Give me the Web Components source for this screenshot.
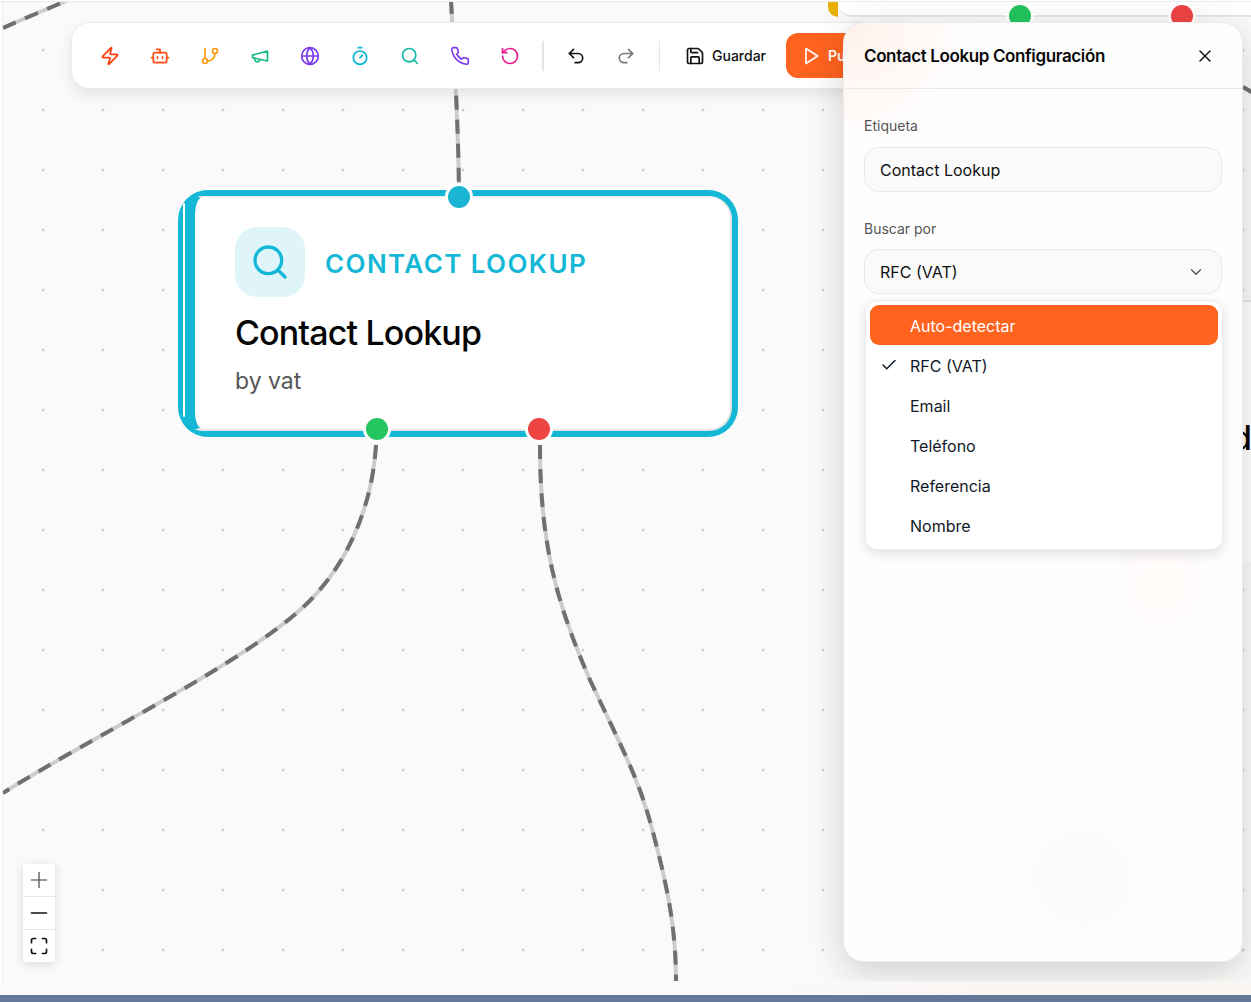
<!DOCTYPE html>
<html lang="es">
<head>
  <meta charset="UTF-8">
  <title>Contact Lookup Configuración</title>
  <style>
    html, body { margin: 0; height: 100%; overflow: hidden; }
    body {
      background-color: #f9f6f4;
      font-family: 'Inter', 'Liberation Sans', sans-serif;
      color: #0a0a0a;
    }
  </style>
</head>
<body>

<script>
  const ICONS = {
    zap: '<path d="M4 14a1 1 0 0 1-.78-1.63l9.9-10.2a.5.5 0 0 1 .86.46l-1.92 6.02A1 1 0 0 0 13 10h7a1 1 0 0 1 .78 1.63l-9.9 10.2a.5.5 0 0 1-.86-.46l1.92-6.02A1 1 0 0 0 11 14z"/>',
    bot: '<path d="M12 8V4H8"/><rect x="4" y="8" width="16" height="12" rx="2"/><path d="M2 14h2"/><path d="M20 14h2"/><path d="M15 13v2"/><path d="M9 13v2"/>',
    branch: '<line x1="6" y1="3" x2="6" y2="15"/><circle cx="18" cy="6" r="3"/><circle cx="6" cy="18" r="3"/><path d="M18 9a9 9 0 0 1-9 9"/>',
    megaphone: '<path d="m3 11 18-5v12L3 14v-3z"/><path d="M11.6 16.8a3 3 0 1 1-5.8-1.6"/>',
    globe: '<circle cx="12" cy="12" r="10"/><path d="M12 2a14.5 14.5 0 0 0 0 20 14.5 14.5 0 0 0 0-20"/><path d="M2 12h20"/>',
    timer: '<line x1="10" y1="2" x2="14" y2="2"/><line x1="12" y1="14" x2="15" y2="11"/><circle cx="12" cy="14" r="8"/>',
    search: '<circle cx="11" cy="11" r="8"/><path d="m21 21-4.3-4.3"/>',
    phone: '<path d="M22 16.92v3a2 2 0 0 1-2.18 2 19.79 19.79 0 0 1-8.63-3.07 19.5 19.5 0 0 1-6-6 19.79 19.79 0 0 1-3.07-8.67A2 2 0 0 1 4.11 2h3a2 2 0 0 1 2 1.72 12.84 12.84 0 0 0 .7 2.81 2 2 0 0 1-.45 2.11L8.09 9.91a16 16 0 0 0 6 6l1.27-1.27a2 2 0 0 1 2.11-.45 12.84 12.84 0 0 0 2.81.7A2 2 0 0 1 22 16.92z"/>',
    rotate: '<path d="M3 12a9 9 0 1 0 9-9 9.75 9.75 0 0 0-6.74 2.74L3 8"/><path d="M3 3v5h5"/>',
    undo: '<path d="M9 14 4 9l5-5"/><path d="M4 9h10.5a5.5 5.5 0 0 1 5.5 5.5a5.5 5.5 0 0 1-5.5 5.5H11"/>',
    redo: '<path d="m15 14 5-5-5-5"/><path d="M20 9H9.5A5.5 5.5 0 0 0 4 14.5A5.5 5.5 0 0 0 9.5 20H13"/>',
    save: '<path d="M15.2 3a2 2 0 0 1 1.4.6l3.8 3.8a2 2 0 0 1 .6 1.4V19a2 2 0 0 1-2 2H5a2 2 0 0 1-2-2V5a2 2 0 0 1 2-2z"/><path d="M17 21v-7a1 1 0 0 0-1-1H8a1 1 0 0 0-1 1v7"/><path d="M7 3v4a1 1 0 0 0 1 1h7"/>',
    play: '<polygon points="6 3 20 12 6 21 6 3"/>',
    x: '<path d="M18 6 6 18"/><path d="m6 6 12 12"/>',
    chevron: '<path d="m6 9 6 6 6-6"/>',
    check: '<path d="M20 6 9 17l-5-5"/>',
    plus: '<path d="M12 3v18"/><path d="M3 12h18"/>',
    minus: '<path d="M3 12h18"/>',
    fit: '<path d="M8 3H5a2 2 0 0 0-2 2v3"/><path d="M21 8V5a2 2 0 0 0-2-2h-3"/><path d="M3 16v3a2 2 0 0 0 2 2h3"/><path d="M16 21h3a2 2 0 0 0 2-2v-3"/>'
  };

  class BaseElement extends HTMLElement {
    constructor() {
      super();
      this.attachShadow({ mode: 'open' });
    }
    render(css, html) {
      this.shadowRoot.innerHTML = `<style>${css}</style>${html}`;
    }
  }

  class UiIcon extends BaseElement {
    connectedCallback() {
      const size = this.getAttribute('size') || 20;
      const width = this.getAttribute('stroke') || 2;
      const color = this.getAttribute('color') || 'currentColor';
      this.render(':host { display: inline-flex; flex: none; } svg { display: block; }',
        `<svg width="${size}" height="${size}" viewBox="0 0 24 24" fill="none" stroke="${color}" stroke-width="${width}" stroke-linecap="round" stroke-linejoin="round">${ICONS[this.getAttribute('name')]}</svg>`);
    }
  }
  customElements.define('ui-icon', UiIcon);

  class ToolButton extends BaseElement {
    connectedCallback() {
      this.render(`
        :host { display: flex; width: 36px; height: 36px; align-items: center; justify-content: center; flex: none; }
      `, '<slot></slot>');
    }
  }
  customElements.define('tool-button', ToolButton);

  class FlowToolbar extends BaseElement {
    connectedCallback() {
      this.render(`
        :host {
          position: absolute; left: 69px; top: 21px;
          display: flex; align-items: center; gap: 14px;
          height: 65px; padding: 0 20px; box-sizing: border-box;
          background: #fff; border-radius: 18px;
          box-shadow: 0 0 0 1px #ececec, 0 6px 16px rgba(0,0,0,.1);
          white-space: nowrap;
        }
        .sep { width: 2px; height: 30px; background: #e4e4e4; flex: none; }
        .sep.thin { width: 1px; margin: 0 .5px; }
        .save { display: flex; align-items: center; gap: 7px; padding: 0 6px 0 11px; width: 98px; box-sizing: border-box; font-size: 14px; font-weight: 500; color: #111; }
        .publish {
          display: flex; align-items: center; gap: 7px; height: 45px; padding: 0 15px;
          background: #ff631f; color: #fff; border-radius: 12px; font-size: 14px; font-weight: 600;
        }
      `, `
        <tool-button><ui-icon name="zap" color="#ff3b0a"></ui-icon></tool-button>
        <tool-button><ui-icon name="bot" color="#ff4a12"></ui-icon></tool-button>
        <tool-button><ui-icon name="branch" color="#ff9a0a"></ui-icon></tool-button>
        <tool-button><ui-icon name="megaphone" color="#10b981"></ui-icon></tool-button>
        <tool-button><ui-icon name="globe" color="#7c3aed"></ui-icon></tool-button>
        <tool-button><ui-icon name="timer" color="#06b6d4"></ui-icon></tool-button>
        <tool-button><ui-icon name="search" color="#14b8a6"></ui-icon></tool-button>
        <tool-button><ui-icon name="phone" color="#7c3aed"></ui-icon></tool-button>
        <tool-button><ui-icon name="rotate" color="#ec1a8f"></ui-icon></tool-button>
        <div class="sep"></div>
        <tool-button><ui-icon name="undo" color="#111"></ui-icon></tool-button>
        <tool-button><ui-icon name="redo" color="#777"></ui-icon></tool-button>
        <div class="sep thin"></div>
        <div class="save"><ui-icon name="save" color="#111"></ui-icon><span>Guardar</span></div>
        <div class="publish"><ui-icon name="play" color="#fff"></ui-icon><span>Publicar</span></div>
      `);
    }
  }
  customElements.define('flow-toolbar', FlowToolbar);

  class FlowHandle extends BaseElement {
    connectedCallback() {
      const s = this.style;
      s.left = this.getAttribute('x') + 'px';
      s.top = this.getAttribute('y') + 'px';
      s.background = this.getAttribute('color');
      this.render(`
        :host {
          position: absolute; width: 22px; height: 22px; border-radius: 50%;
          margin: -11px 0 0 -11px; box-shadow: 0 0 0 3px #fff;
        }
      `, '');
    }
  }
  customElements.define('flow-handle', FlowHandle);

  class FlowNode extends BaseElement {
    connectedCallback() {
      this.style.left = this.getAttribute('x') + 'px';
      this.style.top = this.getAttribute('y') + 'px';
      this.render(`
        :host {
          position: absolute; width: 560px; height: 247px; box-sizing: border-box;
          border: 6px solid #14b8d6; border-left-width: 5px; border-radius: 30px;
          background: #14b8d6;
        }
        .sliver { position: absolute; left: 0; top: 7px; bottom: 14px; width: 2px; background: #fff; border-radius: 2px; }
        .card {
          height: 100%; box-sizing: border-box; margin-left: 2px;
          padding: 30px 0 0 40px; border-left: 10px solid #14b8d6;
          border-top: 1px solid #e9e9e9;
          border-right: 2px solid #e6e6e6; border-bottom: 2px solid #e6e6e6;
          border-radius: 18px 23px 23px 18px; background: #fff;
        }
        .head { display: flex; align-items: center; gap: 20px; }
        .tile {
          width: 70px; height: 70px; border-radius: 22px; background: #dff5fa;
          display: flex; align-items: center; justify-content: center; color: #14b8d6;
        }
        .kind { margin-top: 2px; font-size: 26px; font-weight: 600; letter-spacing: 1.4px; color: #14b8d6; text-transform: uppercase; }
        .title { margin-top: 14px; font-size: 34px; line-height: 44px; font-weight: 500; letter-spacing: -.85px; color: #050505; }
        .sub { margin-top: 11px; font-size: 23px; line-height: 30px; color: #555; }
      `, `
        <div class="sliver"></div>
        <div class="card">
          <div class="head">
            <div class="tile"><ui-icon name="search" size="40" color="#14b8d6"></ui-icon></div>
            <div class="kind"><slot name="kind"></slot></div>
          </div>
          <div class="title"><slot name="title"></slot></div>
          <div class="sub"><slot name="sub"></slot></div>
        </div>
        <slot name="handles"></slot>
      `);
    }
  }
  customElements.define('flow-node', FlowNode);

  // nodes that are mostly hidden behind the panel
  class BackNode extends BaseElement {
    connectedCallback() {
      this.render(`
        :host {
          position: absolute; left: 825px; top: -200px; width: 560px; height: 215px;
          display: flex;
        }
        .bar { width: 10px; background: #e8b008; border-radius: 0 0 0 10px; }
        .card { flex: 1; background: #fff; border-bottom: 2px solid #e6e6e6; border-radius: 0 0 0 14px; box-sizing: border-box; }
      `, '<div class="bar"></div><div class="card"></div>');
    }
  }
  customElements.define('back-node', BackNode);

  class BackCard extends BaseElement {
    connectedCallback() {
      this.render(`
        :host {
          position: absolute; left: 1000px; top: 298px; width: 400px; height: 262px;
          box-sizing: border-box; background: #fff; border-top: 2px solid #e6e6e6;
          font-size: 34px; font-weight: 500; color: #050505;
        }
        span { position: absolute; left: 228px; top: 114px; line-height: 44px; }
      `, '<span><slot></slot></span>');
    }
  }
  customElements.define('back-card', BackCard);

  class FormField extends BaseElement {
    connectedCallback() {
      const gap = this.getAttribute('gap') || 11;
      this.render(`
        :host { display: block; margin-bottom: 27px; position: relative; }
        label { display: block; font-size: 14px; line-height: 20px; color: #555; margin-bottom: ${gap}px; }
        .box {
          display: flex; align-items: center; justify-content: space-between;
          height: 45px; padding: 0 16px 0 15px; box-sizing: border-box;
          background: #fafafa; border: 1px solid #e9e9e9; border-radius: 14px;
          font-size: 16px; color: #111;
        }
      `, `
        <label>${this.getAttribute('label')}</label>
        <div class="box"><slot></slot><slot name="end"></slot></div>
        <slot name="menu"></slot>
      `);
    }
  }
  customElements.define('form-field', FormField);

  class SelectMenu extends BaseElement {
    connectedCallback() {
      this.render(`
        :host {
          position: absolute; left: 1px; right: -1px; top: calc(100% + 6px);
          display: block; padding: 4px; background: #fff;
          border: 1px solid #ececec; border-radius: 12px;
          box-shadow: 0 4px 12px rgba(0,0,0,.12);
        }
      `, '<slot></slot>');
    }
  }
  customElements.define('select-menu', SelectMenu);

  class SelectOption extends BaseElement {
    connectedCallback() {
      const checked = this.hasAttribute('checked');
      this.render(`
        :host {
          display: flex; align-items: center; height: 40px; padding: 1px 0 0 40px; box-sizing: border-box;
          position: relative; border-radius: 9px; font-size: 16px; color: #101828;
        }
        :host([active]) { background: #ff631f; color: #fff; }
        ui-icon { position: absolute; left: 10px; top: 11px; }
      `, `${checked ? '<ui-icon name="check" size="18" color="#101828"></ui-icon>' : ''}<slot></slot>`);
    }
  }
  customElements.define('select-option', SelectOption);

  class ConfigPanel extends BaseElement {
    connectedCallback() {
      this.render(`
        :host {
          position: absolute; left: 841px; top: 21px; width: 398px; height: 938px;
          box-sizing: border-box; border-radius: 20px; display: block;
          background:
            radial-gradient(circle at 0 0, #fff1eb, rgba(255,255,255,0) 130px),
            radial-gradient(circle at 60% 91%, #f9fbfc, rgba(255,255,255,0) 150px),
            radial-gradient(circle at 80% 60%, #fffbf9, rgba(255,255,255,0) 90px),
            #fefefe;
          box-shadow: 0 0 0 1px #ececec, 0 10px 36px rgba(40,25,15,.2);
        }
        :host::after {
          content: ''; position: absolute; left: 156px; right: 0; bottom: -2px; height: 6px;
          background: #d4d2d1; z-index: -1; border-radius: 0 0 16px 0;
        }
        header {
          display: flex; align-items: center; justify-content: space-between;
          height: 66px; box-sizing: border-box; padding: 0 27px 0 20px;
          border-bottom: 1px solid #e8e8e8;
          font-size: 17px; font-weight: 600; letter-spacing: -.38px; color: #0a0a0a;
        }
        .body { padding: 27px 20px 0; }
      `, `
        <header><span><slot name="title"></slot></span><ui-icon name="x" size="20" color="#111" stroke="1.8"></ui-icon></header>
        <div class="body"><slot></slot></div>
      `);
    }
  }
  customElements.define('config-panel', ConfigPanel);

  class ZoomControls extends BaseElement {
    connectedCallback() {
      this.render(`
        :host {
          position: absolute; left: 20px; top: 862px; width: 32px; display: block;
          background: #fff; box-shadow: 0 2px 10px rgba(0,0,0,.14);
        }
        div { height: 33px; box-sizing: border-box; display: flex; align-items: center; justify-content: center; border-bottom: 1px solid #e6e6e6; }
        div:first-child { height: 32px; }
        div:last-child { border-bottom: 0; height: 32px; }
      `, `
        <div><ui-icon name="plus" size="20" color="#777"></ui-icon></div>
        <div><ui-icon name="minus" size="20" color="#111"></ui-icon></div>
        <div><ui-icon name="fit" size="20" color="#111" stroke="2"></ui-icon></div>
      `);
    }
  }
  customElements.define('zoom-controls', ZoomControls);

  class FlowEdges extends BaseElement {
    connectedCallback() {
      const paths = [
        'M3 28 C25 18 48 9 70 -1',
        'M451 0 C453 40 458 110 459 190',
        'M376 445 C372 510 345 570 300 610 C235 668 95 735 3 793',
        'M540 445 C540 540 555 600 590 680 C625 755 640 780 655 840 C668 890 676 930 676 981',
        'M1243 87 L1255 94'
      ];
      const draw = paths.map(d => `<path d="${d}" class="base"/><path d="${d}" class="dash"/>`).join('');
      this.render(`
        :host { position: absolute; left: 0; top: 0; display: block; }
        svg { display: block; }
        path { fill: none; stroke-width: 4; }
        .base { stroke: #cdcdcd; }
        .dash { stroke: #707070; stroke-dasharray: 14 10; }
      `, `<svg width="1248" height="979" viewBox="3 2 1248 979">${draw}</svg>`);
    }
  }
  customElements.define('flow-edges', FlowEdges);

  class FlowCanvas extends BaseElement {
    connectedCallback() {
      this.render(`
        :host {
          display: block; position: relative; overflow: hidden;
          height: 979px; margin: 2px 0 0 3px;
          background-color: #fafafa;
          background-image: radial-gradient(circle 1.6px at 40px 48px, #c6ccdb 95%, transparent);
          background-size: 60px 60px;
        }
      `, '<slot></slot>');
    }
  }
  customElements.define('flow-canvas', FlowCanvas);

  class AppShell extends BaseElement {
    connectedCallback() {
      this.render(`
        :host {
          display: flex; flex-direction: column; height: 1002px;
          background: linear-gradient(90deg, #fafafa, #fafafa 60%, #f9f5f3 80%);
        }
        .edge { position: absolute; left: 2px; top: 0; width: 1px; height: 981px; background: #ececec; }
        .top { position: absolute; left: 0; top: 0; width: 100%; height: 2px; background: #fff; border-bottom: 1px solid #ececec; box-sizing: border-box; }
        .left { position: absolute; left: 0; top: 0; width: 2px; height: 981px; background: #fff; }
        .footer { margin-top: 14px; height: 7px; background: #64789a; }
      `, `
        <div class="left"></div><div class="edge"></div><div class="top"></div>
        <slot></slot>
        <div class="footer"></div>
      `);
    }
  }
  customElements.define('app-shell', AppShell);
</script>

<app-shell>
  <flow-canvas>
    <flow-edges></flow-edges>
    <back-node></back-node>
    <flow-handle x="1017" y="14" color="#22c55e"></flow-handle>
    <flow-handle x="1179" y="14" color="#ef4444"></flow-handle>
    <back-card>d</back-card>
    <flow-node x="175" y="188">
      <span slot="kind">Contact Lookup</span>
      <span slot="title">Contact Lookup</span>
      <span slot="sub">by vat</span>
      <flow-handle slot="handles" x="276" y="1" color="#1ab4d4"></flow-handle>
      <flow-handle slot="handles" x="194" y="233" color="#22c55e"></flow-handle>
      <flow-handle slot="handles" x="356" y="233" color="#ef4444"></flow-handle>
    </flow-node>
    <zoom-controls></zoom-controls>
    <flow-toolbar></flow-toolbar>
    <config-panel>
      <span slot="title">Contact Lookup Configuración</span>
      <form-field label="Etiqueta">Contact Lookup</form-field>
      <form-field label="Buscar por" gap="10">
        RFC (VAT)
        <ui-icon slot="end" name="chevron" size="18" color="#555" stroke="1.8"></ui-icon>
        <select-menu slot="menu">
          <select-option active>Auto-detectar</select-option>
          <select-option checked>RFC (VAT)</select-option>
          <select-option>Email</select-option>
          <select-option>Teléfono</select-option>
          <select-option>Referencia</select-option>
          <select-option>Nombre</select-option>
        </select-menu>
      </form-field>
    </config-panel>
  </flow-canvas>
</app-shell>

</body>
</html>
